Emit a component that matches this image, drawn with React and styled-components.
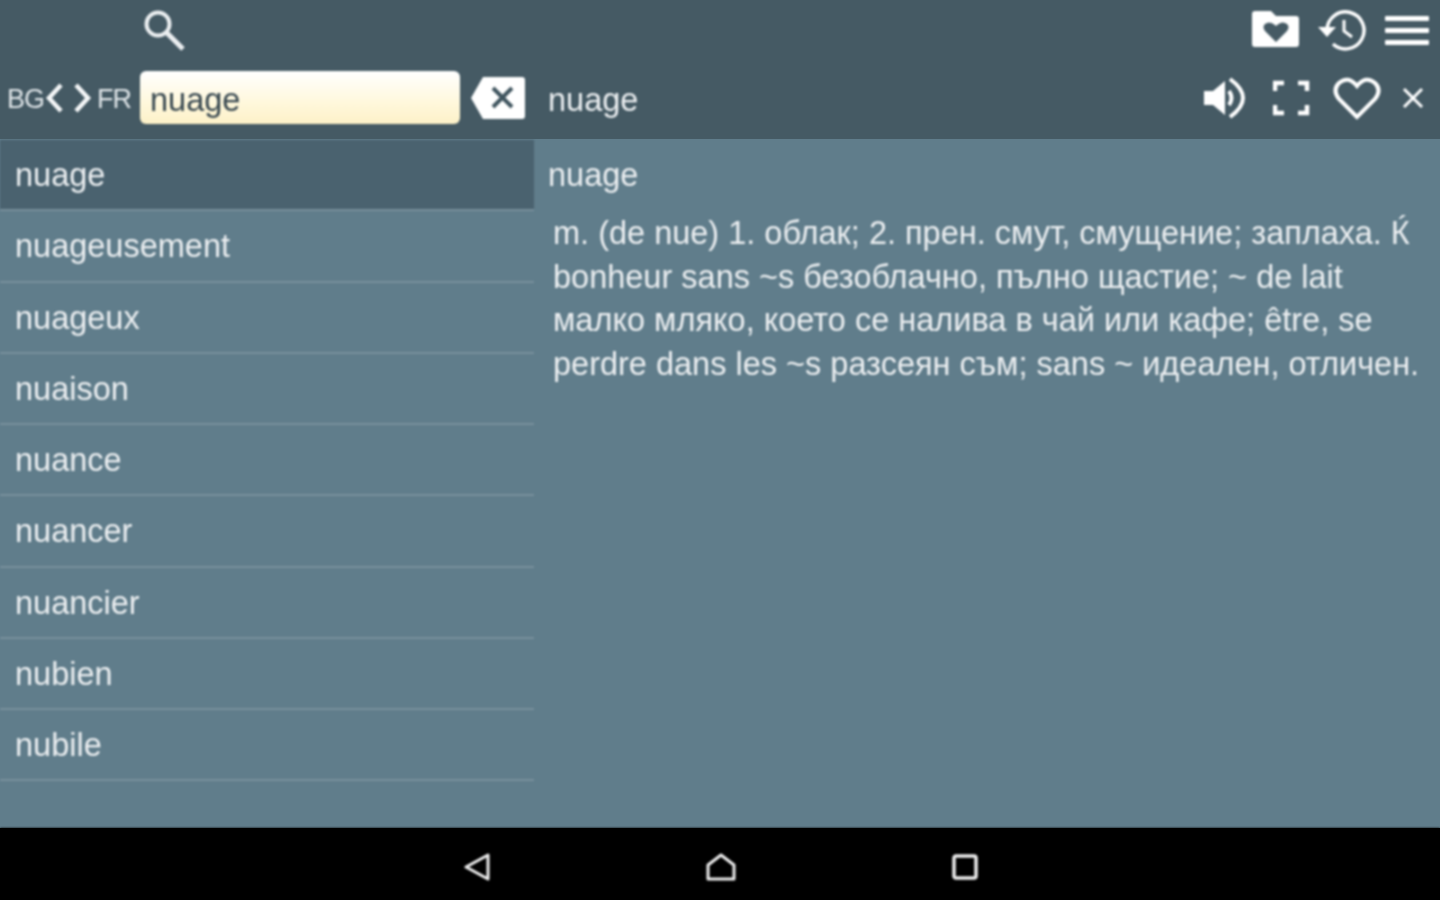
import React from "react";
import styled, { createGlobalStyle, css } from "styled-components";

const Global = createGlobalStyle`
  html, body {
    margin: 0;
    padding: 0;
    background: #000;
    overflow: hidden;
  }
  * {
    box-sizing: border-box;
  }
`;

// the reference is an upscaled screenshot, so everything drawn on the panels is a bit soft
const soft = css`
  filter: blur(0.8px);
`;

const Screen = styled.div`
  width: 1440px;
  height: 900px;
  display: flex;
  flex-direction: column;
  font-family: "Liberation Sans", Arial, sans-serif;
  font-size: 32.5px;
  color: #eceff1;
`;

const Header = styled.header`
  height: 139px;
  background: #455a64;
  display: flex;
  flex-direction: column;
`;

const TopRow = styled.div`
  height: 70px;
  display: flex;
  align-items: center;
  justify-content: space-between;
  padding: 0 11px 11px 144px;
  ${soft}
`;

const IconGroup = styled.div`
  display: flex;
  align-items: center;
  gap: ${(props) => props.gap || 0}px;
`;

const BottomRow = styled.div`
  display: flex;
  align-items: flex-start;
  ${soft}
`;

const SearchSide = styled.div`
  width: 534px;
  height: 55px;
  padding-left: 7px;
  display: flex;
  align-items: center;
`;

const Lang = styled.span`
  font-size: 27px;
  padding-top: 3px;
  width: ${(props) => props.width}px;
  letter-spacing: -1px;
  color: #dfe5e8;
`;

const ChevronSlot = styled.span`
  display: flex;
  width: ${(props) => props.width}px;
`;

const SearchInput = styled.div`
  width: 320px;
  height: 53px;
  margin: 0 10px 0 8px;
  padding: 5px 10px 0;
  display: flex;
  align-items: center;
  border-radius: 6px;
  background: linear-gradient(#ffffff, #fff8dc 60%, #fdf1c8);
  color: #37474f;
`;

const TitleSide = styled.div`
  flex: 1;
  height: 55px;
  padding: 0 16px 0 14px;
  display: flex;
  align-items: center;
  justify-content: space-between;
`;

const Title = styled.span`
  padding-top: 6px;
`;

const Main = styled.main`
  flex: 1;
  display: flex;
  padding-top: 1px;
  background: #607d8b;
`;

const WordList = styled.ul`
  width: 534px;
  margin: 0;
  padding: 0;
  list-style: none;
  ${soft}
`;

const Word = styled.li`
  height: 71.25px;
  padding: 2px 0 0 15px;
  display: flex;
  align-items: center;
  border-bottom: 2px solid #78909c;
  background: ${(props) => (props.$active ? "#4a626f" : "transparent")};
`;

const Detail = styled.section`
  flex: 1;
  padding: 14px 14px 0 14px;
  ${soft}
`;

const DetailTitle = styled.div`
  height: 42px;
  line-height: 42px;
`;

const DetailBody = styled.p`
  margin: 16px 0 0 5px;
  line-height: 43.6px;
`;

const NavBar = styled.nav`
  height: 72px;
  padding: 6px 0 0 2px;
  background: #000;
  display: flex;
  align-items: center;
  justify-content: center;
  gap: 215px;
  ${soft}
`;

const words = [
  "nuage",
  "nuageusement",
  "nuageux",
  "nuaison",
  "nuance",
  "nuancer",
  "nuancier",
  "nubien",
  "nubile",
];

const SearchIcon = () => (
  <svg width="42" height="42" viewBox="0 0 42 42" fill="none" stroke="#eceff1" strokeWidth="4">
    <circle cx="14" cy="15" r="11.5" />
    <path d="M23 24 L39 40" strokeWidth="5" />
  </svg>
);

const FolderHeart = () => (
  <svg width="49" height="37" viewBox="0 0 49 37">
    <path
      d="M3 0 H19 L24 5 H44 Q47 5 47 8 V33 Q47 36 44 36 H3 Q0 36 0 33 V3 Q0 0 3 0 Z"
      fill="#fff"
    />
    <path
      d="M24 31 L13 20 Q10 16 13 13 Q18 9 24 15 Q30 9 35 13 Q38 16 35 20 Z"
      fill="#455a64"
    />
  </svg>
);

const HistoryIcon = () => (
  <svg width="50" height="42" viewBox="1 0 50 42" fill="none" stroke="#fff" strokeWidth="3.5">
    <path d="M10 21 A18.5 18.5 0 1 1 16 35" />
    <path d="M1 18 L10 28 L19 18 Z" fill="#fff" stroke="none" />
    <path d="M27 11 V22 L35 28" strokeWidth="3" />
  </svg>
);

const MenuIcon = () => (
  <svg width="44" height="32" viewBox="0 0 44 32" fill="#fff">
    <rect x="0" y="2" width="44" height="5" rx="1" />
    <rect x="0" y="14" width="44" height="5" rx="1" />
    <rect x="0" y="26" width="44" height="5" rx="1" />
  </svg>
);

const ChevronLeft = () => (
  <svg width="18" height="30" viewBox="0 0 18 30" fill="none" stroke="#f5f7f8" strokeWidth="4.5">
    <path d="M16 2 L4 15 L16 28" />
  </svg>
);

const ChevronRight = () => (
  <svg width="18" height="30" viewBox="0 0 18 30" fill="none" stroke="#f5f7f8" strokeWidth="4.5">
    <path d="M2 2 L14 15 L2 28" />
  </svg>
);

const ClearIcon = () => (
  <svg width="56" height="44" viewBox="0 0 56 44">
    <path d="M13 1 H52 Q55 1 55 4 V40 Q55 43 52 43 H13 L1 22 Z" fill="#fff" />
    <path d="M23 12 L42 31 M42 12 L23 31" stroke="#3f545e" strokeWidth="4" />
  </svg>
);

const SpeakerIcon = () => (
  <svg width="49" height="42" viewBox="0 0 49 42" fill="none">
    <path d="M1 14 H10 L22 4 V38 L10 28 H1 Z" fill="#fff" />
    <path d="M26 14 Q31 21 26 28" stroke="#fff" strokeWidth="4" />
    <path d="M27 2 Q53 21 27 40" stroke="#fff" strokeWidth="4" />
  </svg>
);

const FullscreenIcon = () => (
  <svg width="39" height="36" viewBox="0 0 39 36" fill="none" stroke="#fff" strokeWidth="4.5">
    <path d="M2 11 V3 H11 M25 3 H34 V11 M34 25 V33 H25 M11 33 H2 V25" />
  </svg>
);

const HeartIcon = () => (
  <svg width="48" height="44" viewBox="0 0 48 44" fill="none" stroke="#fff" strokeWidth="4">
    <path d="M24 41 L6 23 Q-1 14 6 7 Q15 -1 24 10 Q33 -1 42 7 Q49 14 42 23 Z" />
  </svg>
);

const CloseIcon = () => (
  <svg width="22" height="22" viewBox="0 0 22 22" stroke="#fff" strokeWidth="3">
    <path d="M2 2 L20 20 M20 2 L2 20" />
  </svg>
);

const BackIcon = () => (
  <svg width="26" height="28" viewBox="0 0 26 28" fill="none" stroke="#eee" strokeWidth="3" strokeLinejoin="round">
    <path d="M24 2 V26 L2 14 Z" />
  </svg>
);

const HomeIcon = () => (
  <svg width="32" height="28" viewBox="0 0 32 28" fill="none" stroke="#eee" strokeWidth="3" strokeLinejoin="round">
    <path d="M3 26 V12 L16 2 L29 12 V26 Z" />
  </svg>
);

const RecentIcon = () => (
  <svg width="26" height="26" viewBox="0 0 26 26" fill="none" stroke="#eee" strokeWidth="3.5">
    <rect x="2" y="2" width="22" height="22" rx="2" />
  </svg>
);

const App = () => {
  return (
    <Screen>
      <Global />
      <Header>
        <TopRow>
          <SearchIcon />
          <IconGroup gap={17}>
            <FolderHeart />
            <HistoryIcon />
            <MenuIcon />
          </IconGroup>
        </TopRow>
        <BottomRow>
          <SearchSide>
            <Lang width={38}>BG</Lang>
            <ChevronSlot width={29}>
              <ChevronLeft />
            </ChevronSlot>
            <ChevronSlot width={23}>
              <ChevronRight />
            </ChevronSlot>
            <Lang width={35}>FR</Lang>
            <SearchInput>nuage</SearchInput>
            <ClearIcon />
          </SearchSide>
          <TitleSide>
            <Title>nuage</Title>
            <IconGroup gap={21}>
              <SpeakerIcon />
              <FullscreenIcon />
              <HeartIcon />
              <CloseIcon />
            </IconGroup>
          </TitleSide>
        </BottomRow>
      </Header>
      <Main>
        <WordList>
          {words.map((word, i) => (
            <Word key={word} $active={i === 0}>
              {word}
            </Word>
          ))}
        </WordList>
        <Detail>
          <DetailTitle>nuage</DetailTitle>
          <DetailBody>
            m. (de nue) 1. облак; 2. прен. смут, смущение; заплаха. Ќ bonheur
            sans ~s безоблачно, пълно щастие; ~ de lait малко мляко, което се
            налива в чай или кафе; être, se perdre dans les ~s разсеян съм; sans
            ~ идеален, отличен.
          </DetailBody>
        </Detail>
      </Main>
      <NavBar>
        <BackIcon />
        <HomeIcon />
        <RecentIcon />
      </NavBar>
    </Screen>
  );
};

export default App;
